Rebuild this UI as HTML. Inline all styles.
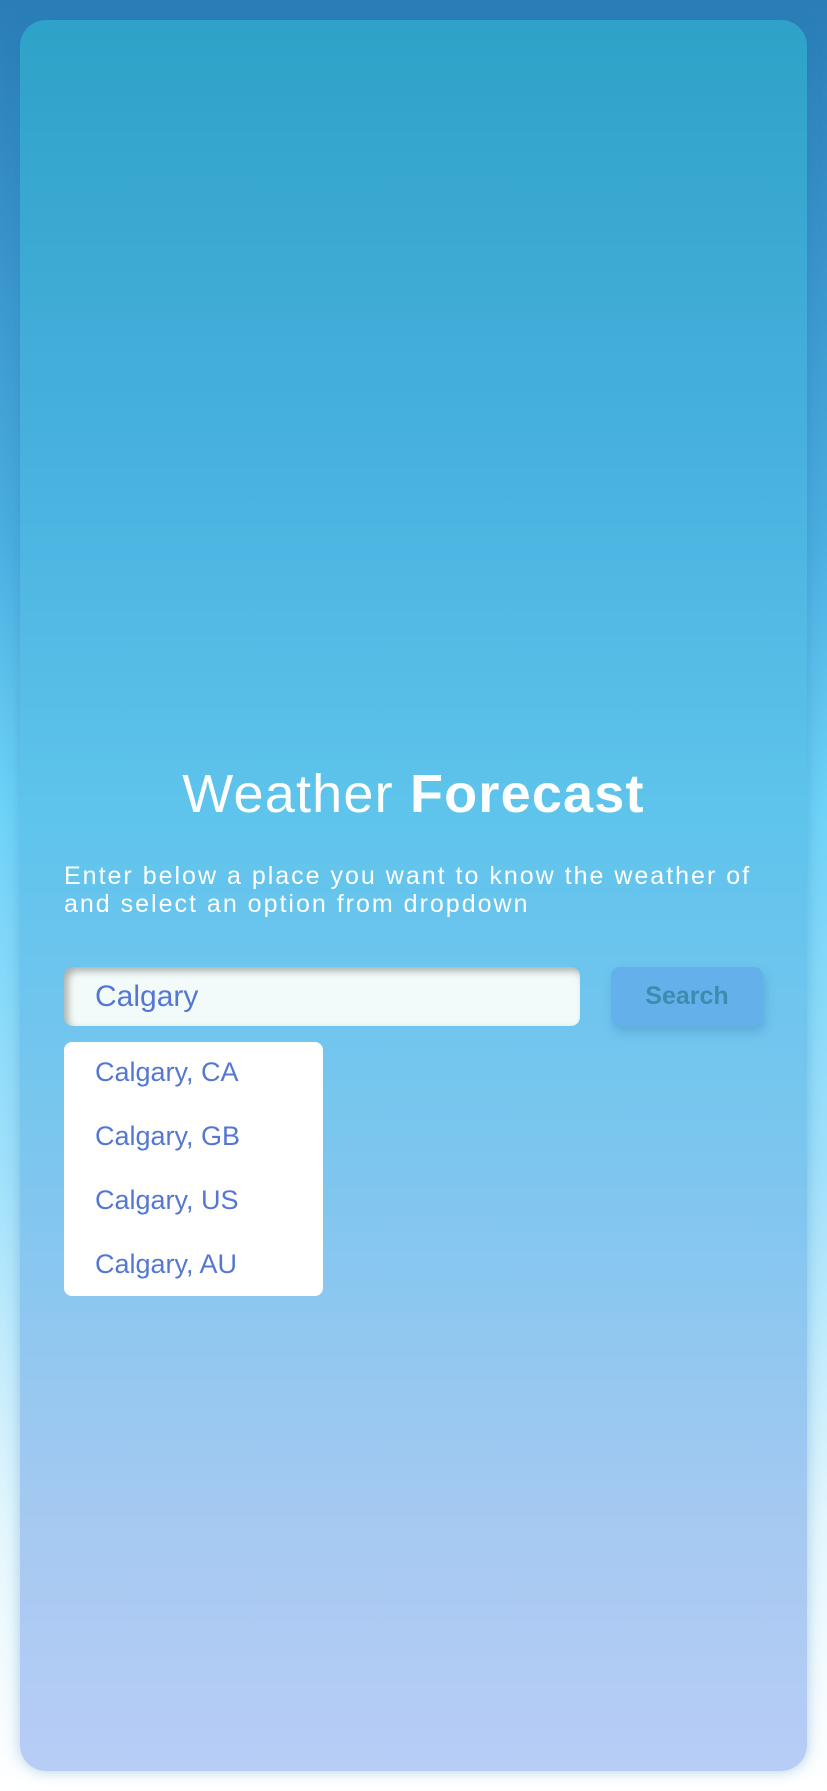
<!DOCTYPE html>
<html><head><meta charset="utf-8"><style>
html,body{margin:0;padding:0;width:827px;height:1791px;overflow:hidden;}
body{background:linear-gradient(180deg,#2a7db7 0%,#4aaee0 30%,#6dd2f7 45%,#9fe0fb 65%,#e2f6fd 85%,#ffffff 100%);position:relative;font-family:"Liberation Sans","DejaVu Sans",sans-serif;}
.card{position:absolute;left:20px;top:20px;width:787px;height:1751px;border-radius:26px;background:linear-gradient(180deg,#2ea2c8 0%,#48b1de 25%,#5ec4ec 45%,#7cc6ef 65%,#a4c9f1 85%,#b8cdf6 100%);box-shadow:0 0 14px rgba(40,120,180,.35);}
.title{position:absolute;left:0;width:827px;top:760px;text-align:center;color:#fff;font-size:54px;line-height:68px;letter-spacing:1.2px;}
.title b{font-weight:bold}
.p{position:absolute;left:64px;top:862px;color:#fff;font-size:25px;line-height:28px;letter-spacing:2px;white-space:nowrap;}
.inp{position:absolute;left:64px;top:967px;width:516px;height:59px;border-radius:9px;background:#f2fbf9;box-shadow:inset 4px 4px 8px rgba(0,0,0,.3);}
.inp span{position:absolute;left:31px;top:13px;font-size:30px;color:#5577d4;}
.btn{position:absolute;left:611px;top:967px;width:152px;height:59px;border-radius:9px;background:#64b0ea;box-shadow:2px 6px 10px rgba(40,100,160,.25);color:#3f8bb0;font-weight:bold;font-size:25px;text-align:center;line-height:59px;}
.dd{position:absolute;left:64px;top:1042px;width:259px;height:254px;border-radius:8px;background:#fff;}
.dd div{position:absolute;left:31px;font-size:27px;color:#5577d4;}
</style></head><body>
<div class="card"></div>
<div class="title">Weather <b>Forecast</b></div>
<div class="p">Enter below a place you want to know the weather of<br>and select an option from dropdown</div>
<div class="inp"><span>Calgary</span></div>
<div class="btn">Search</div>
<div class="dd">
<div style="top:15px">Calgary, CA</div>
<div style="top:79px">Calgary, GB</div>
<div style="top:143px">Calgary, US</div>
<div style="top:207px">Calgary, AU</div>
</div>
</body></html>
